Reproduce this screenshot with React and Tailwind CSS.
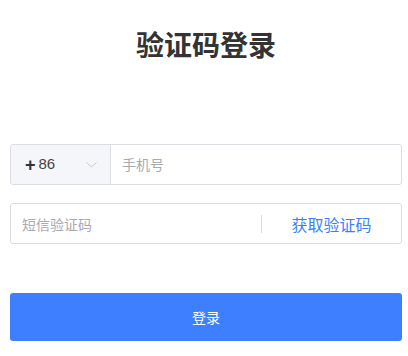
export default function App() {
  return (
    <div
      className="h-[356px] overflow-hidden bg-white pl-[10px] pr-[6px] pt-[26px]"
      style={{ fontFamily: '"Noto Sans CJK SC", "Noto Sans", sans-serif' }}
    >
      {/* Title */}
      <h1 className="text-center text-[28px] font-bold leading-[36px] text-[#333333]">验证码登录</h1>

      {/* Phone */}
      <div className="mt-[82px] flex h-[41px] rounded-[3px] border border-[#dcdde2]">
        <div
          className="flex w-[100px] items-center rounded-l-[3px] border-r border-[#dcdde2] bg-[#f5f6fa] pl-[14px] pr-[13px] text-[15px]"
          style={{ fontFamily: '"Liberation Sans", sans-serif' }}
        >
          <span className="text-[18px] font-bold leading-none text-[#333]">+</span>
          <span className="ml-[3px] text-[#444]">86</span>
          <svg className="ml-auto" width="11" height="6" viewBox="0 0 11 6" fill="none">
            <path d="M0.5 0.5L5.5 5L10.5 0.5" stroke="#c6c8ce" strokeWidth="1" />
          </svg>
        </div>
        <input
          className="min-w-0 flex-1 bg-transparent pl-[11px] text-[14px] text-[#333] outline-none placeholder:text-[#a8aab0]"
          placeholder="手机号"
        />
      </div>

      {/* SMS code */}
      <div className="mt-[18px] flex h-[41px] items-center rounded-[3px] border border-[#dcdde2]">
        <input
          className="h-full min-w-0 flex-1 bg-transparent pl-[11px] text-[14px] text-[#333] outline-none placeholder:text-[#a8aab0]"
          placeholder="短信验证码"
        />
        <div className="h-[18px] w-px bg-[#dcdde2]" />
        <button className="w-[139px] text-center text-[16px] text-[#3c7ff6]">获取验证码</button>
      </div>

      {/* Submit */}
      <button className="mt-[49px] h-[48px] w-full rounded-[3px] bg-[#3e7fff] text-[14px] text-white">登录</button>
    </div>
  )
}
